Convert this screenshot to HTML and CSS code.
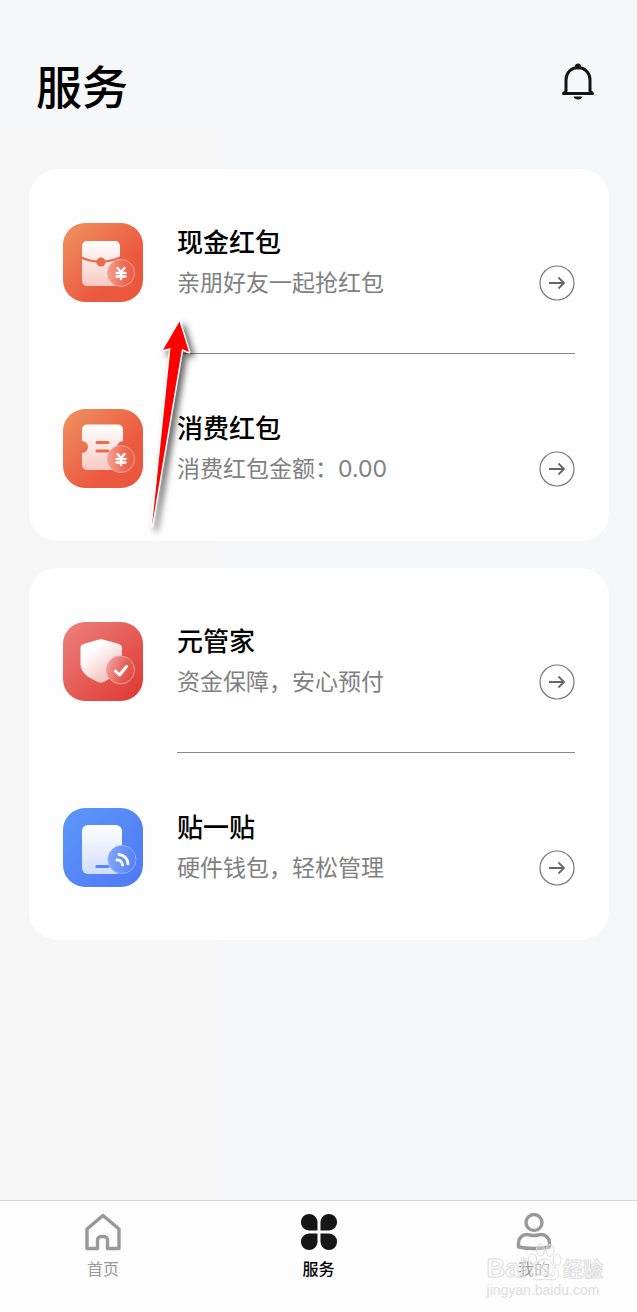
FILE: index.html
```html
<!DOCTYPE html>
<html lang="zh-CN">
<head>
<meta charset="utf-8">
<meta name="viewport" content="width=device-width, initial-scale=1">
<title>服务</title>
<link rel="stylesheet" href="styles.css">
</head>
<body>
<div class="app">
  <header class="header">
    <h1 class="title">服务</h1>
    <button class="bell" type="button" aria-label="通知">
      <svg width="34" height="38" viewBox="0 0 34 38" fill="none" stroke="#141414" stroke-width="3" stroke-linejoin="round" stroke-linecap="round">
        <path d="M5 28V16.500a12 12 0 0 1 24 0V28l2.500 2.500h-29z"/>
        <circle cx="17" cy="3.500" r="3" fill="#141414" stroke="none"/>
        <path d="M12.500 33.500h9a4.600 3.800 0 0 1-9 0z" fill="#141414" stroke="none"/>
      </svg>
    </button>
  </header>

  <main class="content">
    <section class="card">
      <a class="item" href="#cash">
        <svg class="item-icon" viewBox="0 0 80 80">
          <defs>
            <linearGradient id="orange" x1="0" y1="0" x2="1" y2="1"><stop offset="0" stop-color="#f09362"/><stop offset=".65" stop-color="#eb5a3f"/><stop offset="1" stop-color="#e9553c"/></linearGradient>
            <linearGradient id="paper" x1="0" y1="0" x2="0" y2="1"><stop offset="0" stop-color="#fff"/><stop offset="1" stop-color="#f8cac3"/></linearGradient>
            <linearGradient id="coin" x1="0" y1=".5" x2="1" y2=".5"><stop offset="0" stop-color="#f3a094"/><stop offset=".6" stop-color="#ed6d55"/><stop offset="1" stop-color="#ea5b42"/></linearGradient>
          </defs>
          <rect y="1" width="80" height="79" rx="22" fill="url(#orange)"/>
          <path d="M24 19h28a5 5 0 0 1 5 5v10l-3 3.500q3-1 3 2V59a5 5 0 0 1-5 5H24a5 5 0 0 1-5-5V24a5 5 0 0 1 5-5z" fill="url(#paper)"/>
          <path d="M18 35.500Q38 44 57 35.500" fill="none" stroke="#ec6a4a" stroke-width="2"/>
          <circle cx="38" cy="40" r="4.500" fill="#ec6a4a"/>
          <circle cx="58" cy="51" r="13.500" fill="url(#coin)" stroke="#f5a496" stroke-width="1"/>
          <path d="M54.500 46l3.500 4 3.500-4M58 50v7M53.500 51h9M53.500 54.500h9" fill="none" stroke="#fff" stroke-width="2.400" stroke-linecap="round"/>
        </svg>
        <span class="item-body">
          <span class="item-text"><span class="item-name">现金红包</span><span class="item-desc">亲朋好友一起抢红包</span></span>
          <svg class="go" viewBox="0 0 36 36"><circle cx="18" cy="18" r="17"/><path d="M10 18h15M19.500 12.500L25 18l-5.500 5.500"/></svg>
        </span>
      </a>
      <a class="item" href="#spend">
        <svg class="item-icon" viewBox="0 0 80 80">
          <rect y="1" width="80" height="79" rx="22" fill="url(#orange)"/>
          <path d="M24 16.500h31a5 5 0 0 1 5 5V33a6 6 0 0 0 0 12v17H24a5 5 0 0 1-5-5V45a6 6 0 0 0 0-12V21.500a5 5 0 0 1 5-5z" fill="url(#paper)"/>
          <path d="M34 34.500h11M34 43h11" stroke="#ec6a4a" stroke-width="3" stroke-linecap="round"/>
          <circle cx="58" cy="51" r="13.500" fill="url(#coin)" stroke="#f5a496" stroke-width="1"/>
          <path d="M54.500 46l3.500 4 3.500-4M58 50v7M53.500 51h9M53.500 54.500h9" fill="none" stroke="#fff" stroke-width="2.400" stroke-linecap="round"/>
        </svg>
        <span class="item-body">
          <span class="item-text"><span class="item-name">消费红包</span><span class="item-desc">消费红包金额：0.00</span></span>
          <svg class="go" viewBox="0 0 36 36"><circle cx="18" cy="18" r="17"/><path d="M10 18h15M19.500 12.500L25 18l-5.500 5.500"/></svg>
        </span>
      </a>
    </section>

    <section class="card">
      <a class="item" href="#butler">
        <svg class="item-icon" viewBox="0 0 80 80">
          <defs>
            <linearGradient id="red" x1="0" y1="0" x2="1" y2="1"><stop offset="0" stop-color="#ed827c"/><stop offset="1" stop-color="#de3630"/></linearGradient>
            <linearGradient id="shield" x1="0" y1="0" x2=".7" y2="1"><stop offset=".3" stop-color="#fff"/><stop offset="1" stop-color="#f3b9b8"/></linearGradient>
            <linearGradient id="seal" x1="0" y1=".3" x2="1" y2=".7"><stop offset="0" stop-color="#f0a29e"/><stop offset=".6" stop-color="#e55f59"/><stop offset="1" stop-color="#e24842"/></linearGradient>
          </defs>
          <rect y="1" width="80" height="79" rx="22" fill="url(#red)"/>
          <path d="M36 18.500q2-1 4 0l16 4.500q3 1 3 4v15c0 9-9 14-18 19q-3 1.500-6 0C26 57 17.500 52 17.500 43V27q0-3 3-4z" fill="url(#shield)"/>
          <circle cx="57.500" cy="49" r="14" fill="url(#seal)" stroke="#f0a09c" stroke-width="1"/>
          <path d="M52.500 50l4 4 7-8.500" fill="none" stroke="#fff" stroke-width="3" stroke-linecap="round" stroke-linejoin="round"/>
        </svg>
        <span class="item-body">
          <span class="item-text"><span class="item-name">元管家</span><span class="item-desc">资金保障，安心预付</span></span>
          <svg class="go" viewBox="0 0 36 36"><circle cx="18" cy="18" r="17"/><path d="M10 18h15M19.500 12.500L25 18l-5.500 5.500"/></svg>
        </span>
      </a>
      <a class="item" href="#tap">
        <svg class="item-icon" viewBox="0 0 80 80">
          <defs>
            <linearGradient id="blue" x1="0" y1="0" x2="1" y2="1"><stop offset="0" stop-color="#5c97f8"/><stop offset="1" stop-color="#4f78f6"/></linearGradient>
            <linearGradient id="phone" x1="0" y1="0" x2="0" y2="1"><stop offset="0" stop-color="#fff"/><stop offset="1" stop-color="#d0ddfd"/></linearGradient>
            <linearGradient id="wave" x1="0" y1=".5" x2="1" y2=".5"><stop offset="0" stop-color="#80a5f8"/><stop offset="1" stop-color="#5380f6"/></linearGradient>
          </defs>
          <rect y="1" width="80" height="79" rx="22" fill="url(#blue)"/>
          <rect x="19" y="18" width="40" height="49" rx="6" fill="url(#phone)"/>
          <path d="M34 59.500h11" stroke="#5686f7" stroke-width="3.200" stroke-linecap="round"/>
          <circle cx="59" cy="52.500" r="14" fill="url(#wave)" stroke="#8fb0fa" stroke-width="1"/>
          <path d="M56 47.500a9.500 9.500 0 0 1 9 9.500M54 53a5 5 0 0 1 5.500 5" fill="none" stroke="#fff" stroke-width="2.800" stroke-linecap="round"/>
        </svg>
        <span class="item-body">
          <span class="item-text"><span class="item-name">贴一贴</span><span class="item-desc">硬件钱包，轻松管理</span></span>
          <svg class="go" viewBox="0 0 36 36"><circle cx="18" cy="18" r="17"/><path d="M10 18h15M19.500 12.500L25 18l-5.500 5.500"/></svg>
        </span>
      </a>
    </section>

    <svg class="pointer" width="60" height="230" viewBox="0 0 60 230" aria-hidden="true">
      <path d="M39.500 13.500L23 42l7.500-2L12 218 42 41l7 3z" fill="#f00" stroke="#fff" stroke-width="3" stroke-linejoin="round" paint-order="stroke"/>
    </svg>
  </main>

  <nav class="tabs">
    <a class="tab" href="#home">
      <svg width="40" height="40" viewBox="0 0 40 40" fill="none" stroke="#999" stroke-width="3.400" stroke-linejoin="round">
        <path d="M20 3.500L4 17v19.500h10.500V28a3.500 3.500 0 0 1 3.500-3.500h3A3.500 3.500 0 0 1 24.500 28v8.500H36V17z"/>
      </svg>
      <span>首页</span>
    </a>
    <a class="tab tab-active" href="#service" aria-current="page">
      <svg width="40" height="40" viewBox="0 0 40 40" fill="#161616">
        <path d="M18.500 18.500H10A8.300 8.300 0 1 1 18.500 10zM21.500 18.500V10A8.300 8.300 0 1 1 30 18.500zM18.500 21.500V30A8.300 8.300 0 1 1 10 21.500zM21.500 21.500H30A8.300 8.300 0 1 1 21.500 30z"/>
      </svg>
      <span>服务</span>
    </a>
    <a class="tab" href="#mine">
      <svg width="40" height="40" viewBox="0 0 40 40" fill="none" stroke="#999" stroke-width="3.400" stroke-linejoin="round">
        <circle cx="20" cy="10.500" r="8"/>
        <path d="M4.500 35v-4a8.500 8.500 0 0 1 11-8q4.500 1 9 0a8.500 8.500 0 0 1 11 8v4Q20 38 4.500 35z"/>
      </svg>
      <span>我的</span>
    </a>
    <div class="mark" aria-hidden="true">
      <div class="mark-name">
        <span class="mark-latin">Bai</span>
        <svg width="34" height="38" viewBox="0 0 34 38" fill="#fff" fill-opacity=".3" stroke="#ddd" stroke-width="1">
          <ellipse cx="4.500" cy="16" rx="4" ry="5.500"/><ellipse cx="12.500" cy="7" rx="4" ry="6"/><ellipse cx="22" cy="7.500" rx="4" ry="6"/><ellipse cx="29" cy="17" rx="4" ry="5.500"/>
          <path d="M17 16c5 0 7 6 11 9s4 11-3 12q-8-2-16 0c-7-1-8-8-4-12s6-9 12-9z"/>
          <text x="8" y="33" font-size="16" font-weight="700" stroke-width=".5">du</text>
        </svg>
        <span class="mark-cn">经验</span>
      </div>
      <div class="mark-site">jingyan.baidu.com</div>
    </div>
  </nav>
</div>
</body>
</html>
```
FILE: styles.css
```css
* { box-sizing: border-box; }

body {
  margin: 0;
  background: #f5f7fa;
  color: #000;
  font-family: "Noto Sans CJK SC", "Noto Sans", sans-serif;
}

a { color: inherit; text-decoration: none; }
svg { display: block; flex: none; }

.app {
  min-height: 100vh;
  display: flex;
  flex-direction: column;
  background: linear-gradient(90deg, #f6f6f6 220px, #f5f7fa 220px);
}

.header {
  display: flex;
  align-items: center;
  justify-content: space-between;
  padding: 40px 42px 0 36px;
  height: 128px;
  background: #f6f7f9;
}

.title { margin: 0; font-size: 46px; line-height: 80px; font-weight: 500; }
.bell { padding: 0 0 4px; border: 0; background: none; }

.content {
  position: relative;
  flex: 1;
  display: flex;
  flex-direction: column;
  gap: 27px;
  padding: 41px 28px 40px 29px;
}

.card { padding: 0 34px; border-radius: 28px; background: #fefefe; }

.item { display: flex; gap: 34px; height: 186px; }
.item-icon { width: 80px; height: 80px; margin-top: 53px; }

.item-body {
  flex: 1;
  display: flex;
  justify-content: space-between;
  padding-top: 53px;
}
.item:first-child .item-body { height: 185px; border-bottom: 1px solid #888; }

.item-text { display: flex; flex-direction: column; }
.item-name { font-size: 26px; line-height: 38px; font-weight: 500; }
.item-desc {
  font-family: Inter, "Noto Sans CJK SC", sans-serif;
  font-size: 23px;
  line-height: 46px;
  color: #808080;
}

.go {
  width: 36px;
  height: 36px;
  margin-top: 43px;
  fill: none;
  stroke: #777;
  stroke-width: 1.2;
}
.go path { stroke: #666; stroke-width: 1.8; }

.pointer {
  position: absolute;
  left: 140px;
  top: 180px;
  filter: drop-shadow(4px 4px 3px rgba(0, 0, 0, 0.6));
}

.tabs {
  position: relative;
  display: flex;
  justify-content: space-between;
  height: 112px;
  padding: 11px 75px 0;
  border-top: 1px solid #d4d5d7;
  background: #fdfdfd;
}
.tab {
  width: 56px;
  display: flex;
  flex-direction: column;
  align-items: center;
  font-size: 16px;
  line-height: 32px;
  color: #999;
}
.tab-active { color: #000; font-weight: 500; }

.mark {
  position: absolute;
  right: 34px;
  top: 41px;
  color: rgba(255, 255, 255, 0.3);
  -webkit-text-stroke: 1px #ddd;
  font-family: "Liberation Sans", "Noto Sans CJK SC", sans-serif;
}
.mark-name { display: flex; align-items: center; gap: 1px; height: 40px; }
.mark-latin { font-size: 26px; font-weight: 700; padding-top: 12px; }
.mark-cn { font-size: 20px; font-weight: 700; padding-top: 12px; }
.mark-site {
  font-size: 14px;
  line-height: 16px;
  color: #ddd;
  -webkit-text-stroke: 0;
}
```
